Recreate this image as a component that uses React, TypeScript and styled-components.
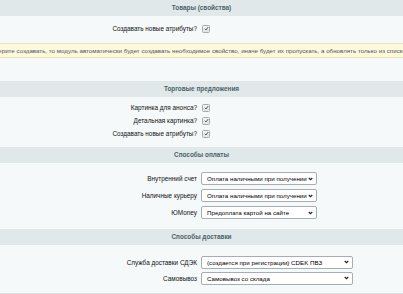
import React from "react";
import styled, { createGlobalStyle } from "styled-components";

const Global = createGlobalStyle`
  html, body { margin: 0; padding: 0; background: #f5f9f9; }
  body { font-family: "Liberation Sans", Arial, sans-serif; color: #000; }
  #root { width: 403px; height: 294px; overflow: hidden; }
`;

const Page = styled.div`
  width: 403px;
  height: 294px;
  background: #f5f9f9;
  overflow: hidden;
  border-bottom: 1px solid #dde5e6;
  box-sizing: border-box;
  display: flex;
  flex-direction: column;
`;

const Header = styled.div`
  height: 16px;
  line-height: 16px;
  background: #e0e8ea;
  color: #4b6267;
  font-size: 6.4px;
  font-weight: bold;
  text-align: center;
`;

const Body = styled.div<{ $top: number; $bottom: number }>`
  padding: ${(p) => p.$top}px 0 ${(p) => p.$bottom}px;
  display: flex;
  flex-direction: column;
`;

const Row = styled.div<{ $h: number }>`
  display: grid;
  grid-template-columns: 201px 1fr;
  height: ${(p) => p.$h}px;
  align-items: center;
`;

const Label = styled.div`
  text-align: right;
  padding-right: 4px;
  font-size: 6.4px;
  color: #111;
  white-space: nowrap;
`;

const Field = styled.div`
  display: flex;
  align-items: center;
`;

const Box = styled.span`
  width: 6px;
  height: 6px;
  border: 1px solid #a3acae;
  border-radius: 1.5px;
  background: linear-gradient(#f4f6f6, #dfe4e5);
  display: inline-flex;
  align-items: center;
  justify-content: center;
  margin-left: 1px;
`;

const Note = styled.div`
  margin-top: 8px;
  height: 13px;
  background: #fcf9df;
  border-top: 1px solid #ece3b2;
  border-bottom: 1px solid #ece3b2;
  display: flex;
  justify-content: center;
  align-items: center;
  overflow: hidden;
`;

const NoteText = styled.span`
  white-space: nowrap;
  flex-shrink: 0;
  font-size: 6.2px;
  color: #555;
`;

const Gap = styled.div<{ $h: number }>`
  height: ${(p) => p.$h}px;
`;

const Select = styled.div<{ $w: number }>`
  width: ${(p) => p.$w}px;
  height: 13px;
  box-sizing: border-box;
  background: #fff;
  border: 1px solid #a5afb1;
  border-radius: 2px;
  display: flex;
  align-items: center;
  justify-content: space-between;
  padding: 0 3px 0 5px;
  font-size: 6.2px;
  color: #000;
  white-space: nowrap;
`;

const Check = () => (
  <Box>
    <svg width="5" height="5" viewBox="0 0 10 10">
      <polyline points="1.5,5.5 4,8 8.5,2" fill="none" stroke="#3f4a4c" strokeWidth="1.8" />
    </svg>
  </Box>
);

const Chevron = () => (
  <svg width="5" height="4" viewBox="0 0 10 8">
    <polyline points="1.5,2 5,5.5 8.5,2" fill="none" stroke="#222" strokeWidth="2.2" />
  </svg>
);

const CheckRow = ({ label }: { label: string }) => (
  <Row $h={13}>
    <Label>{label}</Label>
    <Field>
      <Check />
    </Field>
  </Row>
);

const SelectRow = ({ label, value, w, h }: { label: string; value: string; w: number; h: number }) => (
  <Row $h={h}>
    <Label>{label}</Label>
    <Field>
      <Select $w={w}>
        <span>{value}</span>
        <Chevron />
      </Select>
    </Field>
  </Row>
);

export default function App() {
  return (
    <Page>
      <Global />
      <Header>Товары (свойства)</Header>
      <Body $top={6} $bottom={0}>
        <CheckRow label="Создавать новые атрибуты?" />
      </Body>
      <Note>
        <NoteText>
          Если выберите создавать, то модуль автоматически будет создавать необходимое свойство, иначе будет их пропускать, а обновлять только из списка свойств.
        </NoteText>
      </Note>
      <Gap $h={23} />
      <Header>Торговые предложения</Header>
      <Body $top={4} $bottom={7}>
        <CheckRow label="Картинка для анонса?" />
        <CheckRow label="Детальная картинка?" />
        <CheckRow label="Создавать новые атрибуты?" />
      </Body>
      <Header>Способы оплаты</Header>
      <Body $top={7} $bottom={8}>
        <SelectRow label="Внутренний счет" value="Оплата наличными при получении" w={116} h={17} />
        <SelectRow label="Наличные курьеру" value="Оплата наличными при получении" w={116} h={17} />
        <SelectRow label="ЮMoney" value="Предоплата картой на сайте" w={116} h={17} />
      </Body>
      <Header>Способы доставки</Header>
      <Body $top={9} $bottom={0}>
        <SelectRow label="Служба доставки СДЭК" value="(создается при регистрации) CDEK ПВЗ" w={152} h={16} />
        <SelectRow label="Самовывоз" value="Самовывоз со склада" w={152} h={16} />
      </Body>
    </Page>
  );
}
